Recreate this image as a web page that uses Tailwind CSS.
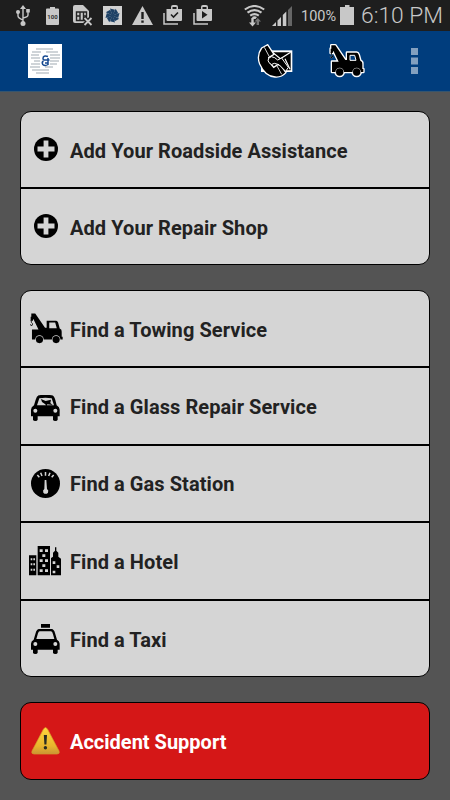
<!DOCTYPE html>
<html lang="en">
<head>
<meta charset="utf-8">
<title>Roadside Assistance</title>
<script src="https://cdn.jsdelivr.net/npm/@tailwindcss/browser@4"></script>
</head>
<body class="w-[450px] h-[800px] overflow-hidden bg-[#545454] font-[Roboto,sans-serif]">
<svg class="hidden">
  <defs>
    <g id="truck-shape">
      <path d="M4 0H16L46 44H51V22H80Q84 22 86 28L91 46Q98 48 97 56V71H100V80H6V49H26L10 16L8 23H2V10H4Z"/>
      <path d="M4 20V27Q10 31 7 36Q2 40 1 33" fill="none" stroke="currentColor" stroke-width="3"/>
    </g>
    <g id="wheels"><circle cx="29" cy="80" r="13" fill="#d5d5d5"/><circle cx="80" cy="80" r="13" fill="#d5d5d5"/><circle cx="29" cy="80" r="11"/><circle cx="80" cy="80" r="11"/></g>
    <g id="plus"><circle cx="12" cy="12" r="12"/><path d="M9.600 3.500h4.800v6.100h6.100v4.800h-6.100v6.100H9.600v-6.100H3.500V9.600h6.100z" fill="#d5d5d5"/></g>
    <g id="bag">
      <path d="M1 8V19H15" fill="none" stroke="#c8c8c8" stroke-width="1.500"/>
      <path d="M3.500 4H8V2Q8 0 10 0H13Q15 0 15 2V4H19V15Q19 16 18 16H4.500Q3.500 16 3.500 15ZM9.500 4H13.500V2H9.500Z" fill="#c8c8c8" fill-rule="evenodd"/>
    </g>
  </defs>
</svg>
<div class="flex flex-col h-full">
  <div class="h-[31px] shrink-0 bg-[#1e1e1e] flex items-start pl-4 text-[#c8c8c8]">
    <svg class="mt-[5px] w-[14px] h-[21px]" viewBox="0 0 14 21" fill="none" stroke="#c8c8c8" stroke-width="1.400"><path d="M7 3V18M2 7V11Q2 13 7 15M12 6V10Q12 12 7 13"/><g fill="#c8c8c8" stroke="none"><path d="M7 0L10 4H4ZM10.200 4h3.600v3.600h-3.600z"/><circle cx="2" cy="7" r="2"/><circle cx="7" cy="18.500" r="2.500"/></g></svg>
    <svg class="mt-[7px] ml-4 w-[13px] h-[18px]" viewBox="0 0 13 18"><path d="M4 0H9V1.500H12Q13 1.500 13 2.500V17Q13 18 12 18H1Q0 18 0 17V2.500Q0 1.500 1 1.500H4Z" fill="#c8c8c8"/><text x="6.500" y="11.500" text-anchor="middle" font-family="Roboto" font-size="6" font-weight="700" fill="#333">100</text></svg>
    <svg class="mt-[5px] ml-[14px] w-[20px] h-[21px]" viewBox="0 0 20 21"><path d="M0 2Q0 0 2 0H10L16 6V18H2Q0 18 0 16Z" fill="#c8c8c8"/><path d="M3.500 7H13.500V15.500H3.500ZM7 7V15.500M10.500 7V15.500M3.500 11H7M10.500 11H13.500" fill="none" stroke="#252525" stroke-width="1.400"/><path d="M11 12.500L18.500 20M18.500 12.500L11 20" stroke="#1e1e1e" stroke-width="4"/><path d="M11.500 13L18.500 20M18.500 13L11.500 20" stroke="#c8c8c8" stroke-width="1.800"/></svg>
    <svg class="mt-[6px] ml-[10px] w-[19px] h-[19px]" viewBox="0 0 19 19"><path d="M0 0H19V19H0Z" fill="#d2d2d2"/><g fill="#1d4166"><path id="blade" d="M9.500 10L7 2.500L12 3.800Z"/><use href="#blade" transform="rotate(45 9.500 9.500)"/><use href="#blade" transform="rotate(90 9.500 9.500)"/><use href="#blade" transform="rotate(135 9.500 9.500)"/><use href="#blade" transform="rotate(180 9.500 9.500)"/><use href="#blade" transform="rotate(225 9.500 9.500)"/><use href="#blade" transform="rotate(270 9.500 9.500)"/><use href="#blade" transform="rotate(315 9.500 9.500)"/></g></svg>
    <svg class="mt-[6px] ml-[10px] w-[21px] h-[19px]" viewBox="0 0 21 19"><path d="M10.500 0L21 19H0Z" fill="#c8c8c8"/><path d="M9.300 6H11.700V13H9.300ZM9.300 14.500H11.700V16.800H9.300Z" fill="#1e1e1e"/></svg>
    <svg class="mt-[5px] ml-[10px] w-[19px] h-[20px]" viewBox="0 0 19 20"><use href="#bag"/><path d="M8 9.500L10.500 12L15 7.500" fill="none" stroke="#1e1e1e" stroke-width="1.600"/></svg>
    <svg class="mt-[5px] ml-[11px] w-[19px] h-[20px]" viewBox="0 0 19 20"><use href="#bag"/><path d="M9 6V13.500L14.500 9.800Z" fill="#1e1e1e"/></svg>
    <svg class="mt-[5px] ml-[32px] w-[21px] h-[22px]" viewBox="0 0 21 22" fill="none" stroke="#c8c8c8" stroke-width="2.100"><path d="M.8 4.500Q10.500-2.500 20.200 4.500M3.500 7.700Q10.500 2.500 17.500 7.700M6.200 10.700Q10.500 7.500 14.800 10.700"/><path d="M8 12Q10.500 10.500 13 12L11.500 14H9Z" fill="#c8c8c8" stroke="none"/><path d="M7.300 13H9.700V17.500H12L8.500 21.500L5 17.500H7.300Z" fill="#c8c8c8" stroke="none"/><path d="M12.600 20V16.500H10.500L13.800 13L17 16.500H15V20Z" fill="#777" stroke="none"/></svg>
    <svg class="mt-[6px] ml-[7px] w-[20px] h-[20px]" viewBox="0 0 20 20" fill="#c8c8c8"><path d="M0 20L4 16V20ZM5.500 14.500L9 11V20H5.500ZM10.800 9L14.300 5.500V20H10.800Z"/><path d="M16 4L20 0V20H16Z" fill="#666"/></svg>
    <span class="ml-[9px] mt-[7px] w-[39px] text-[14.500px] leading-[19px] whitespace-nowrap">100%</span>
    <svg class="mt-[5px] w-[14px] h-[20px]" viewBox="0 0 14 20"><path d="M5 0H9.500V2H14V20H0V2H5Z" fill="#c8c8c8"/></svg>
    <span class="ml-[7px] text-[22.800px] leading-[32px] font-light whitespace-nowrap">6:10 PM</span>
  </div>
  <div class="h-[61px] shrink-0 bg-[#003d7d] border-b border-[#35556f] flex items-center pl-7">
    <svg class="w-[34px] h-[34px]" viewBox="0 0 34 34"><path d="M0 0H34V34H0Z" fill="#fff"/><path d="M8 5H25M4 8H13M18 8H30M3 11H11M22 11H32M3 14H12M22 14H32M6 17H12M22 17H31M3 20H12M22 20H29M2 23H12M17 23H25M4 26H21M8 29H21" stroke="#c0c6cc" stroke-width="1.600"/><path d="M20 12.500Q15 11 15 14.500Q15 16.500 18 16H21.500M20 14V20.500Q17 22.500 14.700 20.500Q13.500 18 15.500 17M17 19H20" fill="none" stroke="#174a91" stroke-width="1.500"/></svg>
    <svg class="ml-[195px] w-[36px] h-[34px]" viewBox="0 0 108 102"><path d="M12 19H106V84H12Z" fill="#fff"/><path d="M40 25H101V79H30Z"/><path d="M48 26L70 44L101 25M84 44L99 76" fill="none" stroke="#fff" stroke-width="3.500"/><path d="M14 12L32 2L51 31L35 41Q36 56 50 70L62 62L71 64L87 86Q73 101 54 99Q24 97 8 60Q-2 34 14 12Z" stroke="#fff" stroke-width="4"/><path d="M35 43Q42 34 53 41L62 48L74 42L94 70L86 82L66 62L52 58Q43 66 36 56Q31 50 35 43Z" stroke="#fff" stroke-width="3"/><path d="M22 10L37 38M60 66L74 91" fill="none" stroke="#fff" stroke-width="2.500"/></svg>
    <svg class="ml-[36px] w-[36px] h-[35px] overflow-visible" viewBox="-3 -4 108 105"><g fill="#fff" stroke="#fff" stroke-width="8" color="#fff" stroke-linejoin="round"><use href="#truck-shape"/><circle cx="29" cy="80" r="12"/><circle cx="80" cy="80" r="12"/></g><g fill="#000" color="#000"><use href="#truck-shape"/></g><path d="M60 30H74L78 45H60Z" fill="#003d7d" stroke="#fff" stroke-width="3"/><use href="#wheels"/></svg>
    <svg class="ml-[46px] w-[7px] h-[26px]" viewBox="0 0 7 26"><path d="M0 0H7V7H0ZM0 9.500H7V16.500H0ZM0 19H7V26H0Z" fill="#83a0bf"/></svg>
  </div>
  <main class="flex flex-col px-5 pt-[19px] text-[20px] tracking-[0.07px] font-bold text-[#222]">
    <section class="h-[154px] rounded-[11px] border-[1.5px] border-black bg-[#d5d5d5] flex flex-col overflow-hidden">
      <div class="h-[77px] border-b-2 border-black flex items-center pl-[12.500px]"><svg class="w-6 h-6 mr-[12.500px] -mt-[2px]" viewBox="0 0 24 24"><use href="#plus"/></svg><span class="pt-[2px]">Add Your Roadside Assistance</span></div>
      <div class="flex-1 flex items-center pl-[12.500px]"><svg class="w-6 h-6 mr-[12.500px] -mt-[2px]" viewBox="0 0 24 24"><use href="#plus"/></svg><span class="pt-[2px]">Add Your Repair Shop</span></div>
    </section>
    <section class="mt-[25px] h-[387px] rounded-[11px] border-[1.5px] border-black bg-[#d5d5d5] grid grid-rows-[77px_78px_77px_78px_75px] overflow-hidden">
      <div class="border-b-2 border-black flex items-center pl-[9px]"><svg class="w-[33px] h-[31px] mr-[7px]" viewBox="0 0 101 92"><use href="#truck-shape"/><path d="M59 28H77L82 45H59Z" fill="#d5d5d5"/><use href="#wheels"/></svg><span class="pt-[2px]">Find a Towing Service</span></div>
      <div class="border-b-2 border-black flex items-center pl-[10px]"><svg class="w-[29px] h-[26px] mr-[10px] mt-[3px]" viewBox="0 0 87 78"><path d="M23 1Q43-3 63 1Q70 3 73 15L77 31Q86 36 86 44V64H80V74Q79 78 73 78Q67 78 66 74V64H20V74Q19 78 13 78Q7 78 6 74V64H0V44Q0 36 9 31L14 14Q17 3 23 1Z"/><path d="M25 10Q43 6 62 10L69 31H18Z" fill="#d5d5d5"/><path d="M30 12L44 18L60 14L58 24L65 30L49 28L46 35L43 28L33 21Z"/><circle cx="13" cy="47" r="6" fill="#d5d5d5"/><circle cx="73" cy="47" r="6" fill="#d5d5d5"/></svg><span class="pt-px">Find a Glass Repair Service</span></div>
      <div class="border-b-2 border-black flex items-center pl-[10px]"><svg class="w-[29px] h-[29px] mr-[10px]" viewBox="0 0 87 87"><circle cx="43.500" cy="43.500" r="43.500"/><g stroke="#d5d5d5" stroke-width="4.500"><path d="M19 18L25 25M29 11L33 21M43.500 9V20M57 11L53 21M68 18L62 25"/></g><path d="M41 33H46L48 60Q54 64 51 71Q44 78 37 71Q34 64 40 60Z" fill="#d5d5d5"/></svg><span class="pt-px">Find a Gas Station</span></div>
      <div class="border-b-2 border-black flex items-center pl-[8px]"><svg class="w-[32px] h-[30px] mr-[9px]" viewBox="0 0 96 90"><path d="M0 28H22V88H0ZM26 0H63V88H26ZM66 88V36L72 32V20L78 14V4H82V14L88 20V32L96 38V88Z"/><path d="M5 37h5v6H5zm8 0h5v6h-5zM5 52h5v6H5zm8 0h5v6h-5zM5 68h5v6H5zm8 0h5v6h-5zM32 10h9v8h-9zm16 0h9v8h-9zM32 40h9v8h-9zm16 0h9v8h-9zM40 25h9v8h-9zM40 55h9v8h-9zM32 70h9v8h-9zm16 0h9v8h-9zM71 46h8v8h-8zm12 12h8v8h-8zM71 74h8v8h-8z" fill="#d5d5d5"/></svg><span class="pt-px">Find a Hotel</span></div>
      <div class="flex items-center pl-[10px]"><svg class="w-[29px] h-[30px] mr-[10px]" viewBox="0 0 87 90"><path d="M30 0H57V11H30ZM24 15H62Q69 16 72 27L78 47Q86 52 86 59V77H80V86Q79 90 73 90Q67 90 66 86V77H20V86Q19 90 13 90Q7 90 6 86V77H0V59Q0 52 8 47L14 27Q17 16 24 15Z"/><path d="M26 22H60Q64 22 66 31L70 45H16L21 28Q23 22 26 22Z" fill="#d5d5d5"/><circle cx="13" cy="60" r="6" fill="#d5d5d5"/><circle cx="73" cy="60" r="6" fill="#d5d5d5"/></svg><span class="pt-[2px]">Find a Taxi</span></div>
    </section>
    <section class="mt-[25px] h-[78px] rounded-[11px] border-[1.5px] border-black bg-[#d51717] text-white flex items-center pl-[10px]"><svg class="w-[29px] h-[28px] mr-[10px]" viewBox="0 0 29 28"><defs><linearGradient id="gold" x2="0" y2="1"><stop stop-color="#ffd83d"/><stop offset=".7" stop-color="#e8b52d"/><stop offset="1" stop-color="#c99435"/></linearGradient></defs><path d="M12.500 2Q14.500-1 16.500 2L28 24Q29 27 26 27H3Q0 27 1 24Z" fill="url(#gold)" stroke="#d49c28" stroke-width=".7"/><path d="M12.800 8H16L15.400 17.500H13.400Z" fill="#292d23"/><circle cx="14.400" cy="20.800" r="1.700" fill="#292d23"/></svg><span class="pt-[2px] tracking-normal">Accident Support</span></section>
  </main>
</div>
</body>
</html>
